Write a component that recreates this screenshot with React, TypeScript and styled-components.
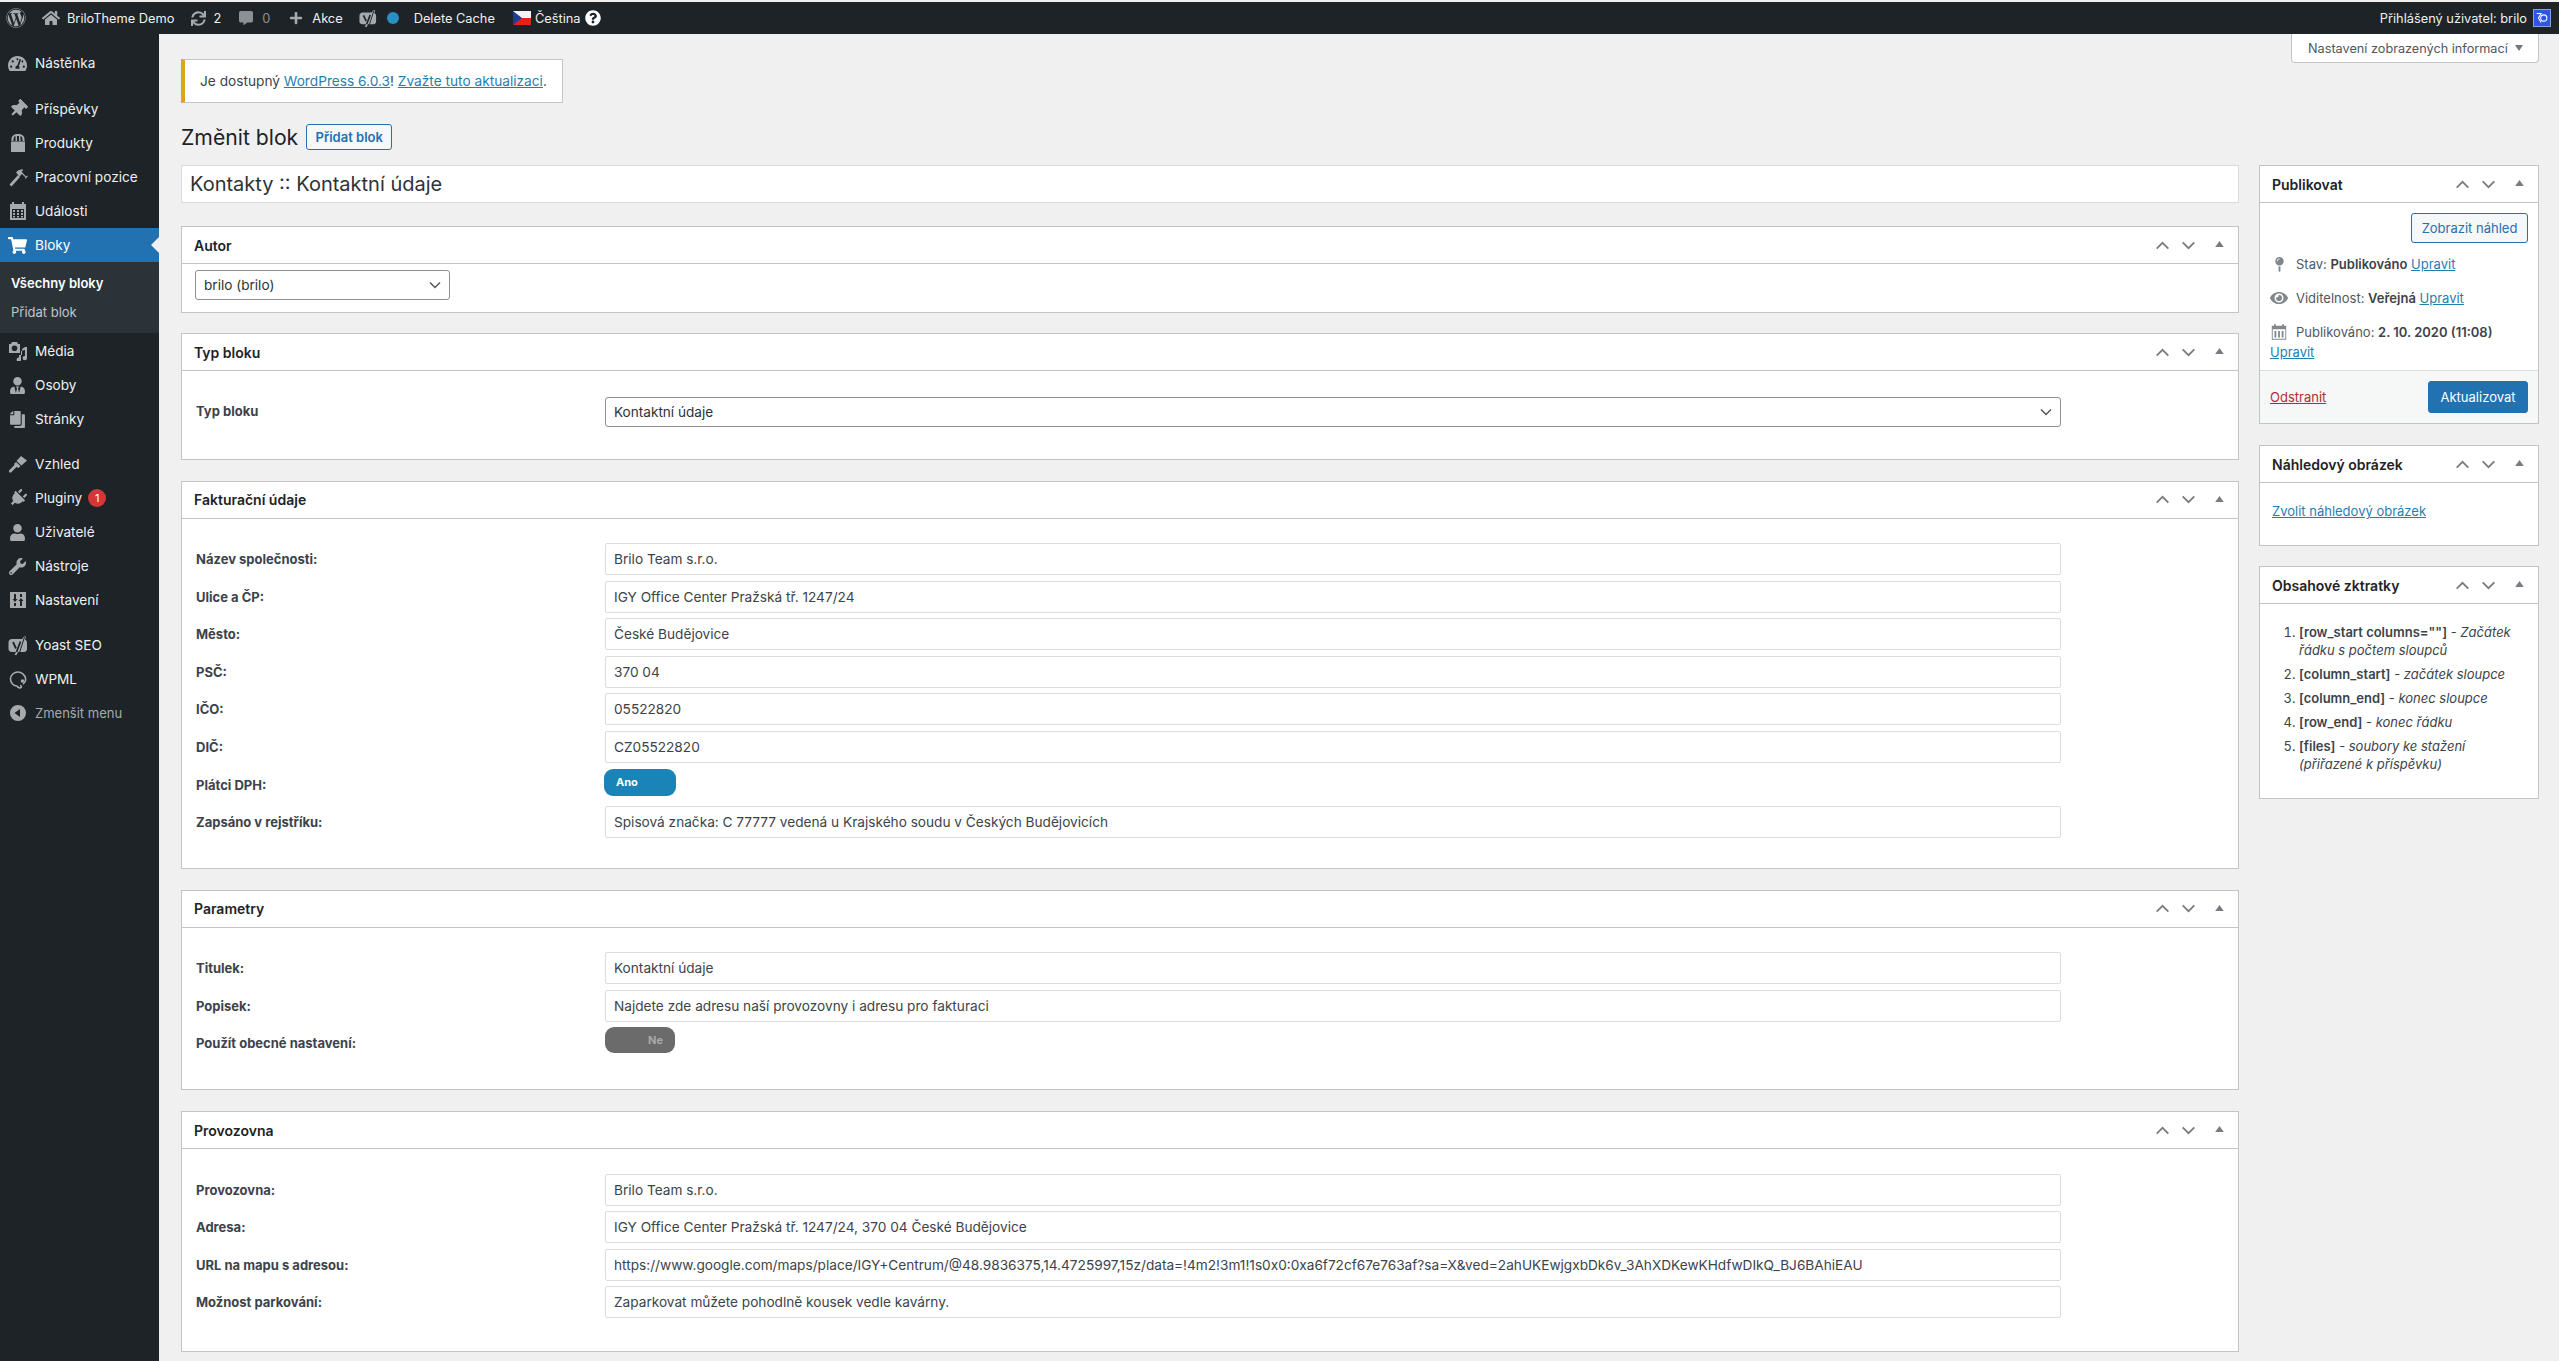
import styled, { createGlobalStyle } from "styled-components";
import type { ReactNode } from "react";
import {
  FaWordpress,
  FaHome,
  FaSync,
  FaCommentAlt,
  FaPlus,
  FaQuestionCircle,
  FaTachometerAlt,
  FaThumbtack,
  FaShoppingCart,
  FaUserTie,
  FaCopy,
  FaPlug,
  FaUser,
  FaWrench,
  FaMapPin,
  FaEye,
} from "react-icons/fa";

const GlobalStyle = createGlobalStyle`
  html, body {
    margin: 0;
    height: 100%;
    overflow: hidden;
    background: #f0f0f1;
  }
  * {
    box-sizing: border-box;
    font-family: Inter, "Liberation Sans", sans-serif;
  }
`;

// ---- drawn icons (dashicons that no icon package has) ----

const BagIcon = () => (
  <svg viewBox="0 0 20 20" width="20" height="20" fill="currentColor">
    <path d="M3 8.500h14V19H3z" />
    <path d="M3.500 8V6c0-3 2.500-5 6.500-5s6.500 2 6.500 5v2h-2V6.500C14.500 4 13 3 12.500 3v5h-1.500V3H9v5H7.500V3C7 3 5.500 4 5.500 6.500V8z" />
  </svg>
);

const HammerIcon = () => (
  <svg viewBox="0 0 20 20" width="20" height="20" fill="currentColor">
    <path d="M1.500 17.500 10 8l2 2-8.500 9.500z" />
    <path d="M8 5.500C10 3 13 2 15.500 3L13.500 4.500 18 9.500l1.500-1 .5.500-2.500 3-.5-.5.500-1L14 7l-2.500 2.500z" />
  </svg>
);

const BrushIcon = () => (
  <svg viewBox="0 0 20 20" width="20" height="20" fill="currentColor">
    <path d="M13 2l6 4.500-5.500 5L8.500 7z" />
    <path d="M8 8l4.500 4-2 2-2-1-5.500 5.500c-1 .5-2.500-.5-2-2L6.500 11 6 10z" />
  </svg>
);

const CalendarIcon = () => (
  <svg viewBox="0 0 20 20" width="20" height="20" fill="currentColor">
    <path
      fillRule="evenodd"
      d="M2 3h2V1h2v2h8V1h2v2h2v16H2zM4 8v9h12V8zM5 9h2v2H5zm4 0h2v2H9zm4 0h2v2h-2zM5 12h2v2H5zm4 0h2v2H9zm4 0h2v2h-2zM5 15h2v1.500H5zm4 0h2v1.500H9zm4 0h2v1.500h-2z"
    />
  </svg>
);

const MediaIcon = () => (
  <svg viewBox="0 0 20 20" width="20" height="20" fill="currentColor">
    <path
      fillRule="evenodd"
      d="M1 3h2l1-2h5l1 2h2v9H1zM6.500 4.500a2.800 2.800 0 1 0 0 5.600 2.800 2.800 0 0 0 0-5.600z"
    />
    <path d="M17 6h2v11a2.200 2.200 0 1 1-2-2.100V9l-4 1v8.500a2.200 2.200 0 1 1-2-2.100V14h3V8z" />
  </svg>
);

const SlidersIcon = () => (
  <svg viewBox="0 0 20 20" width="20" height="20" fill="currentColor">
    <path
      fillRule="evenodd"
      d="M2 2h16v16H2zM6 4v5H4.500L7 12l2.500-3H8V4zm0 9v3h2v-3zm6-9v3h2V4zm1 4-2.500 3H12v5h2v-5h1.500z"
    />
  </svg>
);

const YoastIcon = ({ size = 20 }: { size?: number }) => (
  <svg viewBox="0 0 20 20" width={size} height={size}>
    <path
      fill="currentColor"
      d="M4 4h10l2-2.500h2l-1 3c1 .5 2 1.500 2 3V14c0 2-1.500 3-3 3h-6l-1.500 3h-2L8 17H4c-2 0-3.500-1-3.500-3V7.500C.5 5.500 2 4 4 4z"
    />
    <path fill="none" stroke="#1d2327" strokeWidth="1.800" d="M5 7l3 6.500M12.500 6.500 8.500 17" />
    <path fill="none" stroke="#1d2327" strokeWidth="1" d="M16.500 2 11 19" />
  </svg>
);

const WpmlIcon = () => (
  <svg viewBox="0 0 20 20" width="20" height="20" fill="none" stroke="currentColor" strokeWidth="1.600">
    <path d="M15 15c2-1.500 3-3.500 2.500-6S14 3 10 3 2.500 6 2.500 10s3 7 6.500 7" />
    <path d="M9 17c1 1.500 3 2.500 4 1.500s0-2-1-2" />
    <circle cx="14.500" cy="12" r="1.800" fill="currentColor" stroke="none" />
  </svg>
);

const CollapseIcon = () => (
  <svg viewBox="0 0 20 20" width="20" height="20" fill="currentColor">
    <path fillRule="evenodd" d="M10 2a8 8 0 1 1 0 16 8 8 0 0 1 0-16zm2 4-5.500 4 5.500 4z" />
  </svg>
);

const CzechFlag = () => (
  <svg viewBox="0 0 18 14" width="18" height="14">
    <rect width="18" height="7" fill="#f4f4f4" />
    <rect y="7" width="18" height="7" fill="#e2231a" />
    <path d="M0 0l9 7-9 7z" fill="#1b3f94" />
  </svg>
);

const OutlineCalendar = () => (
  <svg viewBox="0 0 20 20" width="18" height="18" fill="#82878c">
    <path
      fillRule="evenodd"
      d="M2 3h2.500V1.500h2V3h7V1.500h2V3H18v15.500H2zM3 7v10.500h14V7zM5 9h2v7H5zm4 0h2v7H9zm4 0h2v7h-2z"
    />
  </svg>
);

const ChevronUp = () => (
  <svg viewBox="0 0 16 10" width="15" height="9" fill="none" stroke="#787c82" strokeWidth="2">
    <path d="M1.500 8.500 8 2l6.500 6.500" />
  </svg>
);

const ChevronDown = () => (
  <svg viewBox="0 0 16 10" width="15" height="9" fill="none" stroke="#787c82" strokeWidth="2">
    <path d="M1.500 1.500 8 8l6.500-6.500" />
  </svg>
);

const TriangleUp = () => (
  <svg viewBox="0 0 10 7" width="9" height="6" fill="#787c82">
    <path d="M5 0l5 7H0z" />
  </svg>
);

// ---- data ----

interface MenuEntry {
  label: string;
  icon: ReactNode;
  gap?: number;
  current?: boolean;
  badge?: string;
  dim?: boolean;
}

interface FieldRow {
  label: string;
  value?: string;
  toggle?: "on" | "off";
}

const menuTop: MenuEntry[] = [
  { label: "Nástěnka", icon: <FaTachometerAlt size={19} /> },
  { label: "Příspěvky", icon: <FaThumbtack size={18} style={{ transform: "rotate(45deg)" }} />, gap: 12 },
  { label: "Produkty", icon: <BagIcon /> },
  { label: "Pracovní pozice", icon: <HammerIcon /> },
  { label: "Události", icon: <CalendarIcon /> },
  { label: "Bloky", icon: <FaShoppingCart size={19} />, current: true },
];

const menuBottom: MenuEntry[] = [
  { label: "Média", icon: <MediaIcon /> },
  { label: "Osoby", icon: <FaUserTie size={17} /> },
  { label: "Stránky", icon: <FaCopy size={17} style={{ transform: "scaleX(-1)" }} /> },
  { label: "Vzhled", icon: <BrushIcon />, gap: 11 },
  { label: "Pluginy", icon: <FaPlug size={18} style={{ transform: "rotate(45deg)" }} />, badge: "1" },
  { label: "Uživatelé", icon: <FaUser size={17} /> },
  { label: "Nástroje", icon: <FaWrench size={17} /> },
  { label: "Nastavení", icon: <SlidersIcon /> },
  { label: "Yoast SEO", icon: <YoastIcon />, gap: 11 },
  { label: "WPML", icon: <WpmlIcon /> },
  { label: "Zmenšit menu", icon: <CollapseIcon />, dim: true },
];

const billingRows: FieldRow[] = [
  { label: "Název společnosti:", value: "Brilo Team s.r.o." },
  { label: "Ulice a ČP:", value: "IGY Office Center Pražská tř. 1247/24" },
  { label: "Město:", value: "České Budějovice" },
  { label: "PSČ:", value: "370 04" },
  { label: "IČO:", value: "05522820" },
  { label: "DIČ:", value: "CZ05522820" },
  { label: "Plátci DPH:", toggle: "on" },
  { label: "Zapsáno v rejstříku:", value: "Spisová značka: C 77777 vedená u Krajského soudu v Českých Budějovicích" },
];

const paramRows: FieldRow[] = [
  { label: "Titulek:", value: "Kontaktní údaje" },
  { label: "Popisek:", value: "Najdete zde adresu naší provozovny i adresu pro fakturaci" },
  { label: "Použít obecné nastavení:", toggle: "off" },
];

const placeRows: FieldRow[] = [
  { label: "Provozovna:", value: "Brilo Team s.r.o." },
  { label: "Adresa:", value: "IGY Office Center Pražská tř. 1247/24, 370 04 České Budějovice" },
  {
    label: "URL na mapu s adresou:",
    value:
      "https://www.google.com/maps/place/IGY+Centrum/@48.9836375,14.4725997,15z/data=!4m2!3m1!1s0x0:0xa6f72cf67e763af?sa=X&ved=2ahUKEwjgxbDk6v_3AhXDKewKHdfwDIkQ_BJ6BAhiEAU",
  },
  { label: "Možnost parkování:", value: "Zaparkovat můžete pohodlně kousek vedle kavárny." },
];

// ---- small pieces ----

const Handles = () => (
  <HandleGroup>
    <HandleSlot>
      <ChevronUp />
    </HandleSlot>
    <HandleSlot>
      <ChevronDown />
    </HandleSlot>
    <ToggleSlot>
      <TriangleUp />
    </ToggleSlot>
  </HandleGroup>
);

const MenuRow = ({ entry }: { entry: MenuEntry }) => (
  <MenuItem $current={entry.current} $gap={entry.gap} $dim={entry.dim}>
    <MenuIcon $current={entry.current}>{entry.icon}</MenuIcon>
    <MenuLabel $small={entry.dim}>{entry.label}</MenuLabel>
    {entry.badge && <Badge>{entry.badge}</Badge>}
    {entry.current && <CurrentArrow />}
  </MenuItem>
);

const Fields = ({ rows, bottom }: { rows: FieldRow[]; bottom?: number }) => (
  <FieldGrid $bottom={bottom}>
    {rows.map((row) => (
      <FieldLine key={row.label}>
        <FieldLabel>{row.label}</FieldLabel>
        {row.toggle ? (
          <Toggle $on={row.toggle === "on"}>{row.toggle === "on" ? "Ano" : "Ne"}</Toggle>
        ) : (
          <TextInput readOnly value={row.value} />
        )}
      </FieldLine>
    ))}
  </FieldGrid>
);

const App = () => (
  <>
    <GlobalStyle />
    <Page>
      <AdminBar>
        <BarGroup>
          <BarIcon $ml={6}>
            <FaWordpress size={20} />
          </BarIcon>
          <BarIcon $ml={16}>
            <FaHome size={18} />
          </BarIcon>
          <BarText $ml={7}>BriloTheme Demo</BarText>
          <BarIcon $ml={17}>
            <FaSync size={15} />
          </BarIcon>
          <BarText $ml={7}>2</BarText>
          <BarIcon $ml={18} $dim>
            <FaCommentAlt size={14} />
          </BarIcon>
          <BarText $ml={9} $dim>
            0
          </BarText>
          <BarIcon $ml={19}>
            <FaPlus size={14} />
          </BarIcon>
          <BarText $ml={9}>Akce</BarText>
          <BarIcon $ml={16}>
            <YoastIcon size={18} />
          </BarIcon>
          <StatusDot />
          <BarText $ml={15}>Delete Cache</BarText>
          <FlagSlot>
            <CzechFlag />
          </FlagSlot>
          <BarText $ml={4}>Čeština</BarText>
          <BarIcon $ml={4} $white>
            <FaQuestionCircle size={16} />
          </BarIcon>
        </BarGroup>
        <BarGroup>
          <BarText $ml={0}>Přihlášený uživatel: brilo</BarText>
          <Avatar>
            <svg viewBox="0 0 18 18" width="16" height="16" fill="none" stroke="#fff" strokeWidth="1.200">
              <path d="M3 4h5l-3 5 3 5" />
              <circle cx="11" cy="9" r="3.500" />
            </svg>
          </Avatar>
        </BarGroup>
      </AdminBar>

      <Body>
        <Sidebar>
          {menuTop.map((entry) => (
            <MenuRow key={entry.label} entry={entry} />
          ))}
          <SubMenu>
            <SubLink $active>Všechny bloky</SubLink>
            <SubLink>Přidat blok</SubLink>
          </SubMenu>
          {menuBottom.map((entry) => (
            <MenuRow key={entry.label} entry={entry} />
          ))}
        </Sidebar>

        <Main>
          <ScreenOptions>
            Nastavení zobrazených informací
            <OptionsCaret />
          </ScreenOptions>

          <Notice>
            <span>
              Je dostupný <Link href="#">WordPress 6.0.3</Link>! <Link href="#">Zvažte tuto aktualizaci</Link>.
            </span>
          </Notice>

          <HeadingRow>
            <Heading>Změnit blok</Heading>
            <AddButton>Přidat blok</AddButton>
          </HeadingRow>

          <Columns>
            <LeftColumn>
              <TitleInput readOnly value="Kontakty :: Kontaktní údaje" />

              <Box $after={20}>
                <BoxHeader>
                  <BoxTitle>Autor</BoxTitle>
                  <Handles />
                </BoxHeader>
                <AuthorBody>
                  <AuthorSelect defaultValue="brilo">
                    <option value="brilo">brilo (brilo)</option>
                  </AuthorSelect>
                </AuthorBody>
              </Box>

              <Box>
                <BoxHeader>
                  <BoxTitle>Typ bloku</BoxTitle>
                  <Handles />
                </BoxHeader>
                <TypeBody>
                  <FieldLabel>Typ bloku</FieldLabel>
                  <TypeSelect defaultValue="kontakt">
                    <option value="kontakt">Kontaktní údaje</option>
                  </TypeSelect>
                </TypeBody>
              </Box>

              <Box>
                <BoxHeader>
                  <BoxTitle>Fakturační údaje</BoxTitle>
                  <Handles />
                </BoxHeader>
                <Fields rows={billingRows} />
              </Box>

              <Box>
                <BoxHeader>
                  <BoxTitle>Parametry</BoxTitle>
                  <Handles />
                </BoxHeader>
                <Fields rows={paramRows} />
              </Box>

              <Box>
                <BoxHeader>
                  <BoxTitle>Provozovna</BoxTitle>
                  <Handles />
                </BoxHeader>
                <Fields rows={placeRows} bottom={27} />
              </Box>
            </LeftColumn>

            <RightColumn>
              <Box>
                <BoxHeader>
                  <BoxTitle>Publikovat</BoxTitle>
                  <Handles />
                </BoxHeader>
                <PreviewRow>
                  <PreviewButton>Zobrazit náhled</PreviewButton>
                </PreviewRow>
                <MiscRow>
                  <MiscIcon>
                    <FaMapPin size={15} />
                  </MiscIcon>
                  <span>
                    Stav: <strong>Publikováno</strong> <Link href="#">Upravit</Link>
                  </span>
                </MiscRow>
                <MiscRow>
                  <MiscIcon>
                    <FaEye size={18} />
                  </MiscIcon>
                  <span>
                    Viditelnost: <strong>Veřejná</strong> <Link href="#">Upravit</Link>
                  </span>
                </MiscRow>
                <MiscRow>
                  <MiscIcon>
                    <OutlineCalendar />
                  </MiscIcon>
                  <span>
                    Publikováno: <strong>2. 10. 2020 (11:08)</strong>
                  </span>
                </MiscRow>
                <MiscLink>
                  <Link href="#">Upravit</Link>
                </MiscLink>
                <MajorActions>
                  <DeleteLink href="#">Odstranit</DeleteLink>
                  <PrimaryButton>Aktualizovat</PrimaryButton>
                </MajorActions>
              </Box>

              <Box $after={20}>
                <BoxHeader>
                  <BoxTitle>Náhledový obrázek</BoxTitle>
                  <Handles />
                </BoxHeader>
                <ThumbBody>
                  <Link href="#">Zvolit náhledový obrázek</Link>
                </ThumbBody>
              </Box>

              <Box>
                <BoxHeader>
                  <BoxTitle>Obsahové zktratky</BoxTitle>
                  <Handles />
                </BoxHeader>
                <ShortcodeList>
                  <li>
                    <strong>[row_start columns=""]</strong> - <em>Začátek řádku s počtem sloupců</em>
                  </li>
                  <li>
                    <strong>[column_start]</strong> - <em>začátek sloupce</em>
                  </li>
                  <li>
                    <strong>[column_end]</strong> - <em>konec sloupce</em>
                  </li>
                  <li>
                    <strong>[row_end]</strong> - <em>konec řádku</em>
                  </li>
                  <li>
                    <strong>[files]</strong> - <em>soubory ke stažení (přiřazené k příspěvku)</em>
                  </li>
                </ShortcodeList>
              </Box>
            </RightColumn>
          </Columns>
        </Main>
      </Body>
    </Page>
  </>
);

export default App;

// ---- styles ----

const chevronBg = `url("data:image/svg+xml,%3Csvg xmlns='http://www.w3.org/2000/svg' viewBox='0 0 12 8'%3E%3Cpath d='M1 1.500l5 5 5-5' fill='none' stroke='%2350575e' stroke-width='1.500'/%3E%3C/svg%3E")`;

const Page = styled.div`
  height: 1361px;
  display: flex;
  flex-direction: column;
  overflow: hidden;
`;

const AdminBar = styled.header`
  height: 34px;
  flex: none;
  display: flex;
  justify-content: space-between;
  align-items: center;
  padding-right: 8px;
  background: #1d2327;
  border-top: 2px solid #f0f0f1;
`;

const BarGroup = styled.div`
  display: flex;
  align-items: center;
`;

const BarIcon = styled.span<{ $ml: number; $dim?: boolean; $white?: boolean }>`
  display: flex;
  margin-left: ${(p) => p.$ml}px;
  color: ${(p) => (p.$white ? "#fff" : p.$dim ? "#8c8f94" : "#a7aaad")};
`;

const BarText = styled.span<{ $ml: number; $dim?: boolean }>`
  margin-left: ${(p) => p.$ml}px;
  font-size: 12.800px;
  color: ${(p) => (p.$dim ? "#8c8f94" : "#f0f0f1")};
  white-space: nowrap;
`;

const StatusDot = styled.span`
  width: 12px;
  height: 12px;
  margin-left: 10px;
  border-radius: 50%;
  background: #2a8fc4;
`;

const FlagSlot = styled.span`
  display: flex;
  margin-left: 18px;
`;

const Avatar = styled.span`
  display: flex;
  align-items: center;
  justify-content: center;
  width: 18px;
  height: 18px;
  margin-left: 6px;
  background: #2f55e8;
  border: 1px solid #8ea0d8;
`;

const Body = styled.div`
  flex: 1;
  display: flex;
  min-height: 0;
`;

const Sidebar = styled.nav`
  width: 159px;
  flex: none;
  padding-top: 12px;
  background: #1d2327;
`;

const MenuItem = styled.div<{ $current?: boolean; $gap?: number; $dim?: boolean }>`
  position: relative;
  display: flex;
  align-items: center;
  height: 34px;
  margin-top: ${(p) => p.$gap ?? 0}px;
  background: ${(p) => (p.$current ? "#2271b1" : "transparent")};
  color: ${(p) => (p.$current ? "#fff" : p.$dim ? "#a7aaad" : "#f0f0f1")};
`;

const MenuIcon = styled.span<{ $current?: boolean }>`
  display: flex;
  align-items: center;
  justify-content: center;
  width: 35px;
  flex: none;
  color: ${(p) => (p.$current ? "#fff" : "#a7aaad")};
`;

const MenuLabel = styled.span<{ $small?: boolean }>`
  font-size: ${(p) => (p.$small ? "13px" : "13.600px")};
  white-space: nowrap;
`;

const Badge = styled.span`
  display: flex;
  align-items: center;
  justify-content: center;
  width: 18px;
  height: 18px;
  margin-left: 6px;
  border-radius: 50%;
  background: #d63638;
  color: #fff;
  font-size: 11px;
`;

const CurrentArrow = styled.span`
  position: absolute;
  right: 0;
  top: 9px;
  border: 8px solid transparent;
  border-right-color: #f0f0f1;
  border-left-width: 0;
`;

const SubMenu = styled.div`
  height: 71px;
  margin-bottom: 1px;
  padding-top: 9px;
  background: #2c3338;
`;

const SubLink = styled.div<{ $active?: boolean }>`
  height: 29px;
  padding-left: 11px;
  line-height: 25px;
  font-size: 13px;
  font-weight: ${(p) => (p.$active ? 600 : 400)};
  color: ${(p) => (p.$active ? "#fff" : "#c3c4c7")};
`;

const Main = styled.main`
  position: relative;
  flex: 1;
  min-width: 0;
  padding: 25px 20px 0 22px;
`;

const ScreenOptions = styled.div`
  position: absolute;
  top: 0;
  right: 20px;
  display: flex;
  align-items: center;
  width: 248px;
  height: 29px;
  padding-left: 16px;
  background: #fff;
  border: 1px solid #c3c4c7;
  border-top: 0;
  border-radius: 0 0 4px 4px;
  font-size: 12.700px;
  color: #50575e;
`;

const OptionsCaret = styled.span`
  margin-left: 7px;
  border: 4px solid transparent;
  border-top: 6px solid #72777c;
  border-bottom-width: 0;
`;

const Notice = styled.div`
  display: flex;
  align-items: center;
  width: 382px;
  height: 44px;
  padding-left: 15px;
  background: #fff;
  border: 1px solid #c3c4c7;
  border-left: 4px solid #dba617;
  font-size: 13.700px;
  color: #3c434a;
  white-space: nowrap;
`;

const Link = styled.a`
  color: #1f7fae;
  text-decoration: underline;
`;

const HeadingRow = styled.div`
  display: flex;
  align-items: center;
  height: 26px;
  margin-top: 21px;
`;

const Heading = styled.h1`
  margin: 0;
  font-size: 21.200px;
  font-weight: 400;
  color: #1d2327;
`;

const AddButton = styled.button`
  width: 86px;
  height: 26px;
  margin-left: 8px;
  padding: 0;
  background: #f6f7f7;
  border: 1px solid #2271b1;
  border-radius: 3px;
  font-size: 13px;
  font-weight: 600;
  color: #2271b1;
`;

const Columns = styled.div`
  display: grid;
  grid-template-columns: 1fr 280px;
  column-gap: 20px;
  margin-top: 15px;
`;

const LeftColumn = styled.div`
  min-width: 0;
`;

const RightColumn = styled.aside`
  min-width: 0;
`;

const TitleInput = styled.input`
  display: block;
  width: 100%;
  height: 38px;
  margin-bottom: 23px;
  padding: 0 8px;
  background: #fff;
  border: 1px solid #dcdcde;
  font-size: 20px;
  color: #2c3338;
  outline: none;
`;

const Box = styled.section<{ $after?: number }>`
  margin-bottom: ${(p) => p.$after ?? 21}px;
  background: #fff;
  border: 1px solid #c3c4c7;
`;

const BoxHeader = styled.div`
  display: flex;
  align-items: center;
  justify-content: space-between;
  height: 37px;
  padding: 0 12px;
  border-bottom: 1px solid #c3c4c7;
`;

const BoxTitle = styled.h2`
  margin: 0;
  font-size: 14px;
  font-weight: 600;
  color: #1d2327;
`;

const HandleGroup = styled.div`
  display: flex;
  align-items: center;
`;

const HandleSlot = styled.span`
  display: flex;
  justify-content: center;
  width: 26px;
`;

const ToggleSlot = styled.span`
  display: flex;
  justify-content: center;
  width: 36px;
  margin-right: -11px;
  padding-bottom: 2px;
`;

const AuthorBody = styled.div`
  padding: 6px 13px 12px;
`;

const selectBase = `
  display: block;
  height: 30px;
  padding: 0 24px 0 8px;
  background: #fff ${chevronBg} no-repeat right 8px center / 12px 8px;
  border: 1px solid #8c8f94;
  border-radius: 3px;
  appearance: none;
  font-size: 13.600px;
  color: #2c3338;
`;

const AuthorSelect = styled.select`
  ${selectBase}
  width: 255px;
`;

const TypeBody = styled.div`
  display: grid;
  grid-template-columns: 409px 1456px;
  align-items: center;
  padding: 24px 0 30.500px 14px;
`;

const TypeSelect = styled.select`
  ${selectBase}
  width: 100%;
`;

const FieldGrid = styled.div<{ $bottom?: number }>`
  padding: 24.500px 0 ${(p) => p.$bottom ?? 24}px 14px;
`;

const FieldLine = styled.div`
  display: grid;
  grid-template-columns: 409px 1456px;
  height: 37.600px;
`;

const FieldLabel = styled.label`
  line-height: 33px;
  font-size: 13px;
  font-weight: 700;
  color: #3c434a;
  white-space: nowrap;
`;

const TextInput = styled.input`
  width: 100%;
  height: 32px;
  padding: 0 8px;
  background: #fff;
  border: 1px solid #dcdcde;
  border-radius: 2px;
  font-size: 13.650px;
  color: #3c434a;
  outline: none;
`;

const Toggle = styled.span<{ $on: boolean }>`
  display: flex;
  align-items: center;
  justify-content: ${(p) => (p.$on ? "flex-start" : "flex-end")};
  width: ${(p) => (p.$on ? "72px" : "70px")};
  height: ${(p) => (p.$on ? "27px" : "26px")};
  margin-left: ${(p) => (p.$on ? "-1px" : "0")};
  padding: 0 12px;
  background: ${(p) => (p.$on ? "#1a83b7" : "#6b6b6b")};
  border-radius: 9px;
  font-size: 11px;
  font-weight: 700;
  color: ${(p) => (p.$on ? "#fff" : "#a9a9a9")};
`;

const PreviewRow = styled.div`
  display: flex;
  justify-content: flex-end;
  padding: 10px 10px 4px;
`;

const PreviewButton = styled.button`
  width: 117px;
  height: 30px;
  padding: 0;
  background: #f6f7f7;
  border: 1px solid #2271b1;
  border-radius: 3px;
  font-size: 13px;
  color: #2271b1;
`;

const MiscRow = styled.div`
  display: flex;
  align-items: center;
  height: 34px;
  padding-left: 10px;
  font-size: 13px;
  color: #50575e;
  white-space: nowrap;
  strong {
    color: #3c434a;
    font-weight: 600;
  }
`;

const MiscIcon = styled.span`
  display: flex;
  justify-content: center;
  width: 18px;
  margin-right: 8px;
  color: #82878c;
`;

const MiscLink = styled.div`
  height: 21px;
  margin-top: -6px;
  padding-left: 10px;
  font-size: 13px;
  line-height: 18px;
`;

const MajorActions = styled.div`
  display: flex;
  align-items: center;
  justify-content: space-between;
  height: 53px;
  margin-top: 6px;
  padding: 0 10px;
  background: #f6f7f7;
  border-top: 1px solid #dcdcde;
`;

const DeleteLink = styled.a`
  font-size: 13px;
  color: #b32d2e;
  text-decoration: underline;
`;

const PrimaryButton = styled.button`
  width: 100px;
  height: 32px;
  padding: 0;
  background: #2271b1;
  border: 1px solid #2271b1;
  border-radius: 3px;
  font-size: 13px;
  color: #fff;
`;

const ThumbBody = styled.div`
  height: 62px;
  padding: 20px 12px 0;
  font-size: 13px;
`;

const ShortcodeList = styled.ol`
  margin: 0;
  padding: 19px 12px 19px 39px;
  font-size: 13px;
  line-height: 18px;
  color: #3c434a;
  li {
    margin-bottom: 6px;
  }
  strong {
    font-weight: 600;
  }
`;
